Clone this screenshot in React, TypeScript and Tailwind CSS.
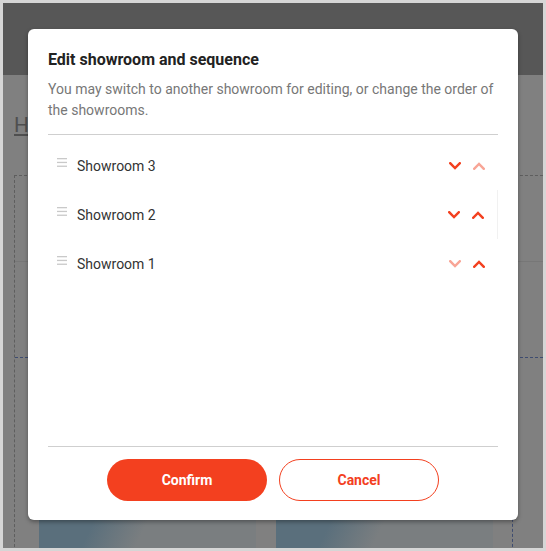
import React from 'react';

const rooms = [
  { name: 'Showroom 3', canDown: true, canUp: false },
  { name: 'Showroom 2', canDown: true, canUp: true },
  { name: 'Showroom 1', canDown: false, canUp: true },
];

function Chevron({ up, active }: { up?: boolean; active: boolean }) {
  return (
    <svg width="12" height="8" viewBox="0 0 12 8" className={up ? 'rotate-180' : ''}>
      <polyline
        points="1.2,1.2 6,6 10.8,1.2"
        fill="none"
        stroke={active ? '#f3401f' : '#f8a596'}
        strokeWidth="2.4"
        strokeLinejoin="miter"
        strokeLinecap="square"
      />
    </svg>
  );
}

function Handle() {
  return (
    <svg width="10" height="9" viewBox="0 0 10 9" className="mb-[6px] ml-[9px] shrink-0">
      <rect x="0" y="0" width="10" height="1.3" fill="#c9c9c9" />
      <rect x="0" y="3.8" width="10" height="1.3" fill="#c9c9c9" />
      <rect x="0" y="7.6" width="10" height="1.3" fill="#c9c9c9" />
    </svg>
  );
}

export default function App() {
  return (
    <div className="w-[546px] h-[551px] bg-[#d6d6d6] p-[3px] font-['Roboto',sans-serif]">
      <div className="relative w-full h-full bg-[#808080] overflow-hidden">
        {/* Page behind the overlay */}
        <div className="h-[72px] bg-[#575757]" />
        <div className="pl-[11px] pt-[37px] text-[21px] leading-[26px] text-[#4f4f4f] underline">Home</div>
        <div className="ml-[11px] mt-[37px] -mr-[10px] border-l border-t border-dashed border-[#5e5e5e]">
          <div className="h-[86px] border-b border-[#777]" />
          <div className="mt-[95px] h-[200px] border-t border-dashed border-[#3e4c70]">
            <div className="mr-[40px] h-full border-r border-dashed border-[#3e4c70] pl-[24px] pt-[22px]">
              <div className="flex gap-[20px]">
                <div className="w-[217px] h-[180px] bg-[linear-gradient(115deg,#5a6f7c_40%,#7a7e80_58%)]" />
                <div className="w-[217px] h-[180px] bg-[linear-gradient(115deg,#5a6f7c_40%,#7a7e80_58%)]" />
              </div>
            </div>
          </div>
        </div>

        {/* Dialog */}
        <div className="absolute left-[25px] top-[26px] w-[490px] h-[491px] bg-white rounded-md shadow-[0_2px_4px_rgba(0,0,0,0.35)] flex flex-col px-5 pt-[19px] pb-[19px]">
          <h2 className="text-[16px] leading-[24px] font-bold text-[#222]">Edit showroom and sequence</h2>
          <p className="mt-[7px] text-[14px] leading-[21px] text-[#777]">
            You may switch to another showroom for editing, or change the order of the showrooms.
          </p>
          <div className="mt-[13px] border-t border-[#cfcfcf]" />
          <ul className="flex-1 pt-[6px]">
            {rooms.map((r, i) => (
              <li
                key={r.name}
                className={`h-[49px] flex items-center pr-[7px] ${i === 1 ? 'border-r border-[#f1f1f1]' : ''}`}
              >
                <Handle />
                <span className="ml-[10px] flex-1 text-[14px] leading-[20px] text-[#333]">{r.name}</span>
                <button className="w-6 h-6 flex items-center justify-center">
                  <Chevron active={r.canDown} />
                </button>
                <button className="w-6 h-6 flex items-center justify-center">
                  <Chevron up active={r.canUp} />
                </button>
              </li>
            ))}
          </ul>
          <div className="border-t border-[#cfcfcf]" />
          <div className="pt-[12px] flex justify-center gap-3">
            <button className="w-[160px] h-[42px] rounded-full bg-[#f3401f] text-white text-[14px] font-bold">Confirm</button>
            <button className="w-[160px] h-[42px] rounded-full border border-[#f3401f] bg-white text-[#f3401f] text-[14px] font-bold">
              Cancel
            </button>
          </div>
        </div>
      </div>
    </div>
  );
}
